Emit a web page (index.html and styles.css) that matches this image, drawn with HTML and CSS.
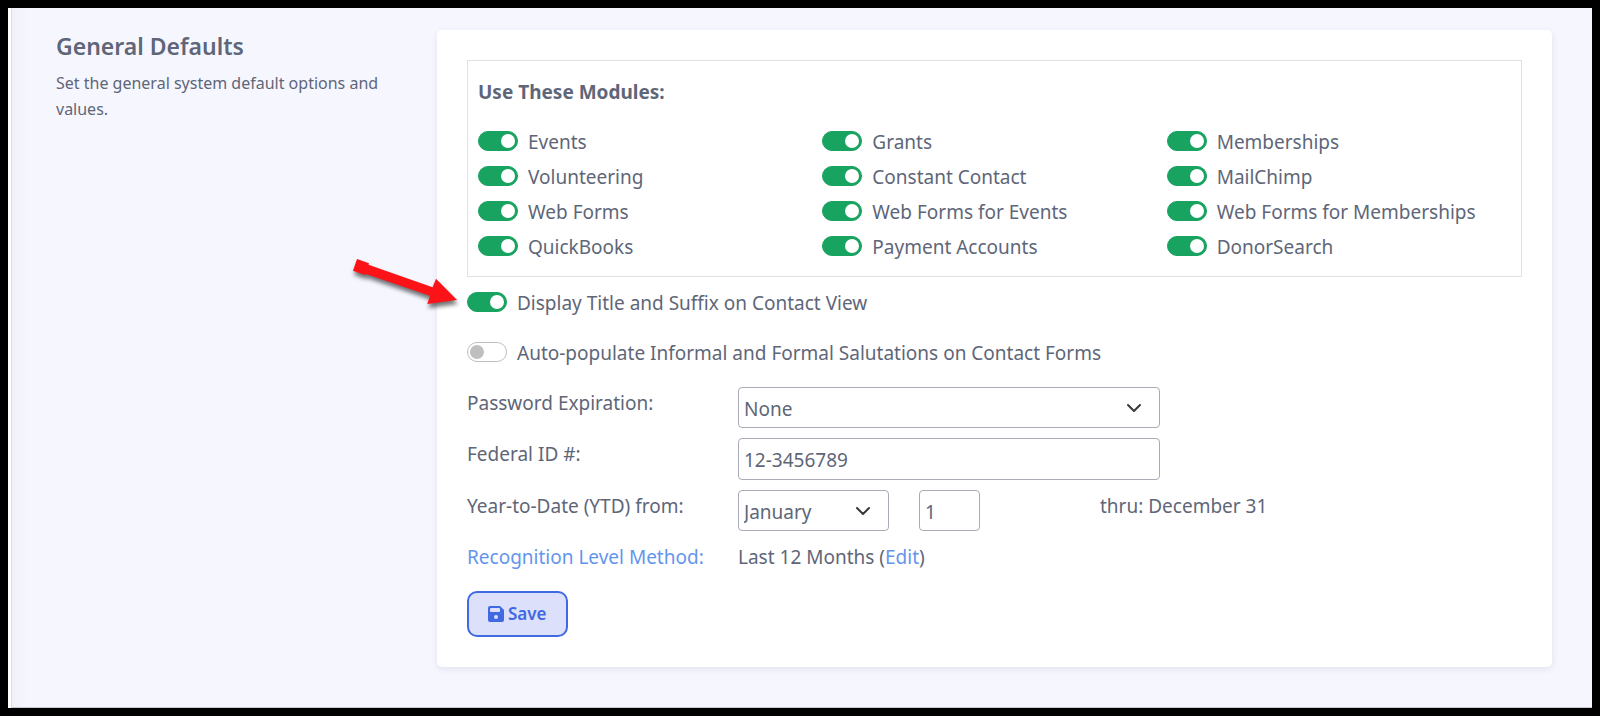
FILE: index.html
```html
<!DOCTYPE html>
<html lang="en">
<head>
<meta charset="utf-8">
<title>General Defaults</title>
<link rel="stylesheet" href="styles.css">
</head>
<body>
<main class="page">
  <header class="intro">
    <h1 class="intro-title">General Defaults</h1>
    <p class="intro-text">Set the general system default options and values.</p>
  </header>
  <form class="card">
    <fieldset class="modules">
      <legend class="modules-title">Use These Modules:</legend>
      <div class="modules-grid">
        <label class="switch"><input type="checkbox" class="toggle" checked>Events</label>
        <label class="switch"><input type="checkbox" class="toggle" checked>Grants</label>
        <label class="switch"><input type="checkbox" class="toggle" checked>Memberships</label>
        <label class="switch"><input type="checkbox" class="toggle" checked>Volunteering</label>
        <label class="switch"><input type="checkbox" class="toggle" checked>Constant Contact</label>
        <label class="switch"><input type="checkbox" class="toggle" checked>MailChimp</label>
        <label class="switch"><input type="checkbox" class="toggle" checked>Web Forms</label>
        <label class="switch"><input type="checkbox" class="toggle" checked>Web Forms for Events</label>
        <label class="switch"><input type="checkbox" class="toggle" checked>Web Forms for Memberships</label>
        <label class="switch"><input type="checkbox" class="toggle" checked>QuickBooks</label>
        <label class="switch"><input type="checkbox" class="toggle" checked>Payment Accounts</label>
        <label class="switch"><input type="checkbox" class="toggle" checked>DonorSearch</label>
      </div>
    </fieldset>
    <div class="options">
      <div class="option">
        <label class="switch"><input type="checkbox" class="toggle" checked>Display Title and Suffix on Contact View</label>
        <svg class="arrow" width="120" height="60" viewBox="347 252 120 60" aria-hidden="true">
          <path fill="#fb1318" d="M357 259L369 263.3L368.5 264.8L432.6 287.2L436 278.7L457 300L427.3 304L430 295.7L366 274L365 275L353 270.7Z"/>
        </svg>
      </div>
      <div class="option">
        <label class="switch"><input type="checkbox" class="toggle">Auto-populate Informal and Formal Salutations on Contact Forms</label>
      </div>
    </div>
    <div class="fields">
      <label class="field-label" for="expiration">Password Expiration:</label>
      <select class="control" id="expiration"><option>None</option></select>

      <label class="field-label" for="federal-id">Federal ID #:</label>
      <input class="control control-text" id="federal-id" type="text" value="12-3456789">

      <label class="field-label" for="ytd-month">Year-to-Date (YTD) from:</label>
      <div class="ytd">
        <select class="control" id="ytd-month"><option>January</option></select>
        <input class="control" type="text" value="1" aria-label="Day">
      </div>
      <span class="field-label thru">thru: December 31</span>

      <a class="field-label link" href="#">Recognition Level Method:</a>
      <span class="field-label">Last 12 Months (<a class="link" href="#">Edit</a>)</span>
    </div>
    <button class="save" type="button">
      <svg width="16" height="16" viewBox="0 0 16 16" aria-hidden="true">
        <path fill="currentColor" fill-rule="evenodd" d="M2 0H12L16 4V14Q16 16 14 16H2Q0 16 0 14V2Q0 0 2 0ZM3 2Q2 2 2 3V5Q2 6 3 6H11Q12 6 12 5V3Q12 2 11 2ZM8 9A2 2 0 1 0 8 13A2 2 0 1 0 8 9Z"/>
      </svg>
      Save
    </button>
  </form>
</main>
</body>
</html>
```
FILE: styles.css
```css
* {
  box-sizing: border-box;
}

body {
  margin: 0;
  min-height: 100vh;
  display: flex;
  border: 8px solid #000;
  background: #fff;
  color: #5e6678;
  font: 19px/28px "Noto Sans", "Open Sans", sans-serif;
}

.page {
  flex: 1;
  display: grid;
  grid-template-columns: 340px minmax(0, 1fr);
  align-items: start;
  gap: 41px;
  margin-left: 3px;
  padding: 22px 40px 40px 44px;
  border-left: 1px solid #dcdde3;
  border-bottom: 1px solid #c9c9d0;
  background: linear-gradient(90deg, #f0f0f8, #f6f6ff 16px);
}

.intro-title {
  margin: 0 0 8px;
  font-size: 23px;
  line-height: 32px;
  font-weight: 600;
}

.intro-text {
  margin: 0;
  font-size: 16px;
  line-height: 26px;
}

.card {
  padding: 30px;
  border-radius: 5px;
  background: #fff;
  box-shadow: 0 2px 6px rgba(60, 60, 110, 0.1);
}

.modules {
  margin: 0;
  padding: 17px 10px 15px;
  border: 1px solid #dee2e6;
}

.modules-title {
  float: left;
  width: 100%;
  margin-bottom: 22px;
  padding: 0;
  font-weight: 700;
}

.modules-grid {
  clear: both;
  display: grid;
  grid-template-columns: repeat(3, 1fr);
  row-gap: 7px;
}

.switch {
  display: flex;
  align-items: center;
  gap: 10px;
}

.toggle {
  appearance: none;
  flex: none;
  display: flex;
  width: 40px;
  height: 20px;
  margin: 0 0 2px;
  padding: 2px;
  border: 1px solid #bfbfbf;
  border-radius: 10px;
  background: #fff;
}

.toggle::before {
  content: "";
  width: 14px;
  height: 14px;
  border-radius: 50%;
  background: #bfbfbf;
}

.toggle:checked {
  justify-content: flex-end;
  border-color: #18a360;
  background: #18a360;
}

.toggle:checked::before {
  background: #fff;
}

.options {
  display: grid;
  gap: 22px;
  margin: 12px 0 20px;
}

.option {
  position: relative;
}

.arrow {
  position: absolute;
  left: -120px;
  top: -37px;
  filter: drop-shadow(1px 4px 2px rgba(0, 0, 0, 0.55));
}

.fields {
  display: grid;
  grid-template-columns: 261px 422px minmax(0, 1fr);
  gap: 10px;
  align-items: start;
}

.field-label {
  grid-column-end: span 1;
  padding: 2px 0;
}

.fields > label,
.fields > a {
  grid-column-start: 1;
}

.ytd {
  display: grid;
  grid-template-columns: 151px 61px;
  gap: 30px;
}

.thru {
  margin-left: -70px;
}

.control {
  width: 100%;
  height: 41px;
  margin: 0;
  padding: 2px 5px 0;
  border: 1px solid #a9acb8;
  border-radius: 4px;
  background: #fff;
  color: inherit;
  font: inherit;
}

.control-text {
  height: 42px;
}

select.control {
  appearance: none;
  background: #fff url("data:image/svg+xml,%3Csvg xmlns='http://www.w3.org/2000/svg' viewBox='0 0 16 16'%3E%3Cpath fill='none' stroke='%23343a40' stroke-linecap='round' stroke-linejoin='round' stroke-width='2' d='m2 5 6 6 6-6'/%3E%3C/svg%3E") no-repeat right 17px center / 16px;
}

.link {
  color: #6495ed;
  text-decoration: none;
}

.save {
  display: flex;
  align-items: center;
  gap: 4px;
  margin-top: 18px;
  padding: 8px 19px;
  border: 2px solid #4169e1;
  border-radius: 10px;
  background: #dde0fb;
  color: #4169e1;
  font: 600 17px/26px "Noto Sans", "Open Sans", sans-serif;
}
```
